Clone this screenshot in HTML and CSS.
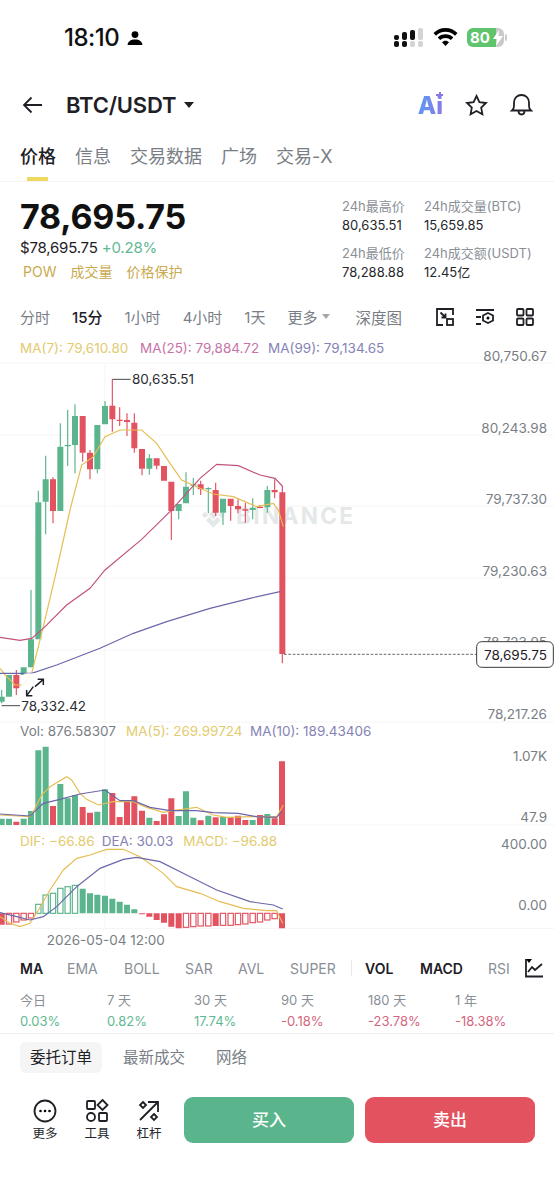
FILE: index.html
```html
<!DOCTYPE html>
<html lang="en">
<head>
    <meta charset="UTF-8">
    <title>BTC/USDT</title>
    <link rel="stylesheet" href="styles.css">
</head>
<body>
    <div class="status-bar">
        <span class="clock">18:10</span>
        <svg class="person" width="16" height="16" viewBox="0 0 16 16"><circle cx="8" cy="4.6" r="3.4"/><path d="M.6 15c0-3.6 3.2-5.6 7.4-5.6s7.4 2 7.4 5.6z"/></svg>
        <div class="status-right">
            <svg width="29" height="20" viewBox="0 0 29 20">
                <g fill="#111"><rect x="0" y="13" width="5" height="6" rx="2"/><rect x="8" y="13" width="5" height="6" rx="2"/><rect x="0" y="7" width="5" height="5" rx="2"/><rect x="8" y="4" width="5" height="8" rx="2"/><rect x="16" y="2" width="5" height="10" rx="2"/></g>
                <g fill="#d4d4d4"><rect x="16" y="13" width="5" height="6" rx="2"/><rect x="24" y="13" width="5" height="6" rx="2"/><rect x="24" y="0" width="5" height="12" rx="2"/></g>
            </svg>
            <svg width="25" height="19" viewBox="0 0 25 19"><path d="M12.5 0C7.8 0 3.600 1.900.5 5l2.500 2.700C5.500 5.300 8.800 3.700 12.500 3.700s7 1.600 9.500 4L24.500 5C21.400 1.900 17.200 0 12.500 0z"/><path d="M12.500 6.200c-3 0-5.800 1.200-7.800 3.200l2.500 2.700c1.400-1.400 3.200-2.200 5.300-2.200s3.900.8 5.300 2.200l2.500-2.700c-2-2-4.800-3.200-7.800-3.200z"/><path d="M12.500 12.700c-1.400 0-2.600.6-3.500 1.500l3.500 3.900 3.500-3.900c-.9-.9-2.100-1.500-3.500-1.500z"/></svg>
            <div class="battery">
                <span class="battery-level">80</span>
                <svg class="bolt" width="10" height="16" viewBox="0 0 10 16"><path d="M6 0 0 9h4l-1 7 7-10H5.500z"/></svg>
            </div>
            <span class="battery-nub"></span>
        </div>
    </div>

    <div class="nav">
        <svg class="back" width="21" height="18" viewBox="0 0 21 18"><path d="M20 9H2M9.500 1.500 2 9l7.500 7.500"/></svg>
        <span class="pair">BTC/USDT</span>
        <span class="caret"></span>
        <div class="nav-icons">
            <span class="ai">Ai<i></i></span>
            <svg width="23" height="23" viewBox="0 0 23 23"><path class="line-icon" d="m11.500 2 2.900 6.100 6.600.9-4.800 4.600 1.200 6.600-5.900-3.200-5.900 3.200 1.200-6.600L2 9l6.600-.9z"/></svg>
            <svg width="23" height="24" viewBox="0 0 23 24"><path class="line-icon" d="M2 17.500c1.500-1.200 2-2.500 2-4.500V9.500C4 5 7.200 2 11.500 2S19 5 19 9.500V13c0 2 .5 3.300 2 4.500zM8.500 18c0 2.200 1.300 3.500 3 3.500s3-1.300 3-3.500"/></svg>
        </div>
    </div>

    <div class="tabs">
        <span class="tab tab-active">价格</span>
        <span class="tab">信息</span>
        <span class="tab">交易数据</span>
        <span class="tab">广场</span>
        <span class="tab">交易-X</span>
    </div>

    <div class="ticker">
        <div class="ticker-left">
            <div class="last-price">78,695.75</div>
            <div class="sub-price">$78,695.75 <span class="green">+0.28%</span></div>
            <div class="tags">
                <span>POW</span>
                <span>成交量</span>
                <span>价格保护</span>
            </div>
        </div>
        <div class="stats">
            <div class="stat"><label>24h最高价</label><b>80,635.51</b></div>
            <div class="stat"><label>24h成交量(BTC)</label><b>15,659.85</b></div>
            <div class="stat"><label>24h最低价</label><b>78,288.88</b></div>
            <div class="stat"><label>24h成交额(USDT)</label><b>12.45亿</b></div>
        </div>
    </div>

    <div class="intervals">
        <span class="interval i-fen">分时</span>
        <span class="interval interval-active">15分</span>
        <span class="interval">1小时</span>
        <span class="interval">4小时</span>
        <span class="interval">1天</span>
        <span class="interval">更多</span>
        <span class="more-caret"></span>
        <span class="interval depth">深度图</span>
        <div class="interval-icons">
            <svg width="18" height="18" viewBox="0 0 18 18"><path class="line-icon" d="M7 17H1V1h16v6M4.500 4.500l5 5M9.500 5.500v4h-4"/><rect class="line-icon" x="11" y="11" width="6" height="6"/></svg>
            <svg width="20" height="18" viewBox="0 0 20 18"><path class="line-icon" d="M1 2h18M1 9h5M1 16h5"/><path class="line-icon" d="m13 5 5 2.500v5L13 15l-5-2.500v-5z"/><circle cx="13" cy="10" r="1.500"/></svg>
            <svg width="18" height="18" viewBox="0 0 18 18"><g class="line-icon"><rect x="1" y="1" width="6.500" height="6.500" rx="1"/><rect x="10.500" y="1" width="6.500" height="6.500" rx="1"/><rect x="1" y="10.500" width="6.500" height="6.500" rx="1"/><rect x="10.500" y="10.500" width="6.500" height="6.500" rx="1"/></g></svg>
        </div>
    </div>

    <!-- viewBox is 3x the page pixels, y 0 = page y 335 -->
    <svg class="chart" width="554" height="615" viewBox="0 0 1662 1845">
        <g class="grid">
            <path d="M0 84H1662M0 300H1662M0 513H1662M0 729H1662M0 945H1662M0 1161H1662M0 1470H1662M0 1780H1662"/>
            <path d="M315 84V1780"/>
        </g>

        <text class="axis" x="1641" y="77">80,750.67</text>
        <text class="axis" x="1641" y="293">80,243.98</text>
        <text class="axis" x="1641" y="508">79,737.30</text>
        <text class="axis" x="1641" y="723">79,230.63</text>
        <text class="axis" x="1641" y="935">78,723.95</text>
        <text class="axis" x="1641" y="1151">78,217.26</text>
        <text class="axis" x="1641" y="1277">1.07K</text>
        <text class="axis" x="1641" y="1460">47.9</text>
        <text class="axis" x="1641" y="1543">400.00</text>
        <text class="axis" x="1641" y="1725">0.00</text>

        <text class="legend c-yellow" x="60" y="54">MA(7): 79,610.80</text>
        <text class="legend c-pink" x="420" y="54">MA(25): 79,884.72</text>
        <text class="legend c-purple" x="804" y="54">MA(99): 79,134.65</text>

        <!-- watermark -->
        <path class="mark" d="M640 525l14 14-14 14-14-14zM615 530l10 10-10 10-10-10zM665 530l10 10-10 10-10-10zM640 558l12-12 10 10-22 22-22-22 10-10z"/>
        <text class="mark" x="708" y="567" textLength="351">BINANCE</text>

        <!-- candles, y offset 105 -->
        <g transform="translate(0 105)">
            <path class="wick up" d="M5 960V1000M93 660V892M115 362V397M137 257V493M181 160V230M203 120V288M225 103V310M292 298V310M315 93V108M448 253V314M536 423V448M558 307V350M580 323V375M625 352V430M669 428V465M758 385V448M802 348V428"/>
            <path class="body up" d="M5 980V995M27 915V980M71 892V915M93 808V892M115 397V808M137 328V395M181 230V423M203 225V229M225 138V225M292 165V298M315 108V163M448 265V296M536 402V423M558 350V400M580 343V347M625 354V358M669 386V428M758 413V420M802 360V412"/>
            <path class="wick down" d="M49 900V975M159 322V460M248 248V275M270 240V328M337 28V185M359 112V168M381 130V198M403 130V248M426 296V316M470 287V298M514 423V510M602 332V375M647 338V438M692 408V452M714 388V430M736 398V458M780 405V415M824 328V385M847 852V880"/>
            <path class="body down" d="M49 915V955M159 328V423M248 138V248M270 248V298M337 107V148M359 149V153M381 150V156M403 158V235M426 237V296M470 265V287M492 288V332M514 335V423M602 343V358M647 360V428M692 386V408M714 408V418M736 418V422M780 410V414M824 360V367M847 367V852"/>

            <polyline class="ma s-yellow" points="0,895 20,920 45,945 70,945 95,910 130,770 170,600 210,420 245,285 280,260 315,200 360,180 425,180 470,220 510,280 545,330 590,350 640,372 700,380 770,410 820,400 835,420 850,470"/>
            <polyline class="ma s-pink" points="0,802 60,811 95,805 130,775 200,705 270,655 315,600 425,508 510,425 600,325 650,283 715,287 780,315 825,325 847,348 847,368"/>
            <polyline class="ma s-purple" points="0,910 95,910 170,885 300,835 400,790 500,755 630,715 750,685 840,665"/>

            <path class="marker" d="M337 28H392M5 1007H60"/>
            <text class="peak" x="396" y="42">80,635.51</text>
            <text class="peak" x="64" y="1024">78,332.42</text>

            <rect class="expand-box" x="65" y="910" width="83" height="80" rx="15"/>
            <path class="expand" d="M105 950 130 928M113 928H130V945M100 950 80 977M80 960V977H97"/>
        </g>

        <line class="last-line" x1="852" y1="958" x2="1430" y2="958"/>
        <rect class="last-box" x="1430" y="920" width="230" height="77" rx="15"/>
        <text class="axis last-text" x="1641" y="975">78,695.75</text>

        <!-- volume and macd, y offset 1155 -->
        <text class="legend c-grey" x="60" y="1203">Vol: 876.58307</text>
        <text class="legend c-yellow" x="378" y="1203">MA(5): 269.99724</text>
        <text class="legend c-purple" x="750" y="1203">MA(10): 189.43406</text>
        <text class="legend c-yellow" x="60" y="1533">DIF: −66.86</text>
        <text class="legend c-purple" x="305" y="1533">DEA: 30.03</text>
        <text class="legend c-yellow" x="550" y="1533">MACD: −96.88</text>

        <g transform="translate(0 1155)">
            <path class="bar up" d="M5 296V315M27 296V315M71 296V315M93 273V315M115 91V315M137 80V315M181 192V315M203 235V315M225 225V315M292 275V315M315 208V315M448 293V315M536 288V315M558 214V315M580 293V315M625 287V315M669 291V315M758 300V315M802 282V315"/>
            <path class="bar down" d="M49 305V315M159 258V315M248 261V315M270 278V315M337 219V315M359 291V315M381 245V315M403 229V315M426 272V315M470 303V315M492 283V315M514 235V315M602 301V315M647 292V315M692 292V315M714 287V315M736 300V315M780 285V315M824 295V315M846 124V315"/>
            <polyline class="ma s-yellow" points="0,285 90,290 105,265 125,225 150,200 200,170 215,180 240,220 260,238 295,255 340,245 400,245 440,262 490,277 530,270 590,262 640,285 680,292 760,290 830,290 850,255"/>
            <polyline class="ma s-purple" points="0,282 90,288 130,250 180,238 240,222 315,210 360,242 400,242 450,262 510,272 590,272 640,278 715,280 770,290 830,292 845,275"/>

            <path class="bar up" d="M248 506V580M270 520V580M292 524V580M315 527V580M337 536V580M359 545V580M381 554V580M403 568V580"/>
            <path class="bar down" d="M5 580V614M426 580V583M448 580V590M470 580V600M492 580V608M514 580V620M536 580V625M647 580V618M846 580V625"/>
            <g class="hollow-up">
                <rect x="107" y="553" width="16" height="27"/><rect x="129" y="525" width="16" height="55"/><rect x="151" y="520" width="16" height="60"/><rect x="173" y="505" width="16" height="75"/><rect x="195" y="500" width="16" height="80"/><rect x="217" y="496" width="16" height="84"/>
            </g>
            <g class="hollow-down">
                <rect x="19" y="580" width="16" height="32"/><rect x="41" y="580" width="16" height="26"/><rect x="63" y="580" width="16" height="20"/><rect x="85" y="580" width="16" height="14"/><rect x="550" y="580" width="16" height="42"/><rect x="572" y="580" width="16" height="40"/><rect x="594" y="580" width="16" height="38"/><rect x="617" y="580" width="16" height="38"/><rect x="661" y="580" width="16" height="36"/><rect x="684" y="580" width="16" height="36"/><rect x="706" y="580" width="16" height="34"/><rect x="728" y="580" width="16" height="32"/><rect x="750" y="580" width="16" height="28"/><rect x="772" y="580" width="16" height="26"/><rect x="794" y="580" width="16" height="20"/><rect x="816" y="580" width="16" height="16"/>
            </g>
            <polyline class="ma s-yellow" points="0,590 30,610 60,620 90,610 115,570 150,510 190,450 230,415 270,405 320,388 370,388 420,410 490,460 530,500 600,520 660,545 730,565 800,572 830,572 848,610"/>
            <polyline class="ma s-purple" points="0,578 50,590 90,600 130,590 170,560 230,500 300,445 370,418 410,412 480,425 560,465 650,510 750,545 820,555 848,567"/>
        </g>

        <text class="date" x="140" y="1830">2026-05-04 12:00</text>
    </svg>

    <div class="indicators">
        <span class="ind ind-on ind-ma">MA</span>
        <span class="ind ind-ema">EMA</span>
        <span class="ind ind-boll">BOLL</span>
        <span class="ind ind-sar">SAR</span>
        <span class="ind ind-avl">AVL</span>
        <span class="ind ind-super">SUPER</span>
        <span class="ind-sep"></span>
        <span class="ind ind-on ind-vol">VOL</span>
        <span class="ind ind-on ind-macd">MACD</span>
        <span class="ind ind-rsi">RSI</span>
        <svg class="ind-icon" width="18" height="20" viewBox="0 0 18 20"><path class="line-icon" d="M1 1V18.500H18M3 14l4-5 3 3 7-6"/><path d="M1 1h6L4 5z"/></svg>
    </div>

    <div class="periods">
        <div class="period"><label>今日</label><span class="green">0.03%</span></div>
        <div class="period"><label>7 天</label><span class="green">0.82%</span></div>
        <div class="period"><label>30 天</label><span class="green">17.74%</span></div>
        <div class="period"><label>90 天</label><span class="red">-0.18%</span></div>
        <div class="period"><label>180 天</label><span class="red">-23.78%</span></div>
        <div class="period"><label>1 年</label><span class="red">-18.38%</span></div>
    </div>

    <div class="sub-tabs">
        <span class="sub-tab sub-tab-active">委托订单</span>
        <span class="sub-tab">最新成交</span>
        <span class="sub-tab">网络</span>
    </div>

    <div class="actions">
        <div class="action">
            <svg width="24" height="24" viewBox="0 0 24 24"><circle class="line-icon" cx="12" cy="12" r="10.500"/><circle cx="7.500" cy="12" r="1.300"/><circle cx="12" cy="12" r="1.300"/><circle cx="16.500" cy="12" r="1.300"/></svg>
            <span>更多</span>
        </div>
        <div class="action">
            <svg width="24" height="24" viewBox="0 0 24 24"><g class="line-icon"><rect x="2" y="2" width="8" height="8" rx="1"/><path d="m17.500 1 5 5-5 5-5-5z"/><circle cx="6" cy="18" r="4"/><rect x="14" y="14" width="8" height="8" rx="1"/></g></svg>
            <span>工具</span>
        </div>
        <div class="action">
            <svg width="24" height="24" viewBox="0 0 24 24"><g class="line-icon"><path d="M3 21 21 3M11 3h10v10"/><path d="m6 3 3 3-3 3-3-3zM17 15l3 3-3 3-3-3z"/></g></svg>
            <span>杠杆</span>
        </div>
        <button class="trade buy">买入</button>
        <button class="trade sell">卖出</button>
    </div>
</body>
</html>
```

FILE: styles.css
```css
body {
    margin: 0;
    width: 554px;
    height: 1200px;
    overflow: hidden;
    background-color: #fff;
    color: #1e2026;
    font-family: Inter, "Noto Sans CJK SC", sans-serif;
}

svg {
    display: block;
}

.line-icon {
    fill: none;
    stroke: #1e2026;
    stroke-width: 1.8;
}

.green {
    color: #62b892;
}

.red {
    color: #d5667e;
}

/* status bar */
.status-bar {
    display: flex;
    align-items: center;
    height: 75px;
    padding-left: 64px;
}

.clock {
    font-size: 24px;
    font-weight: 500;
    letter-spacing: -0.5px;
    color: #111;
}

.person {
    margin-left: 8px;
}

.status-right {
    display: flex;
    align-items: center;
    margin-left: auto;
    margin-right: 47px;
}

.status-right svg:first-child {
    margin-right: 10px;
}

.battery {
    display: flex;
    align-items: center;
    justify-content: space-between;
    box-sizing: border-box;
    width: 37px;
    height: 19px;
    margin-left: 9px;
    padding: 0 1px 0 3px;
    border-radius: 6px;
    background: linear-gradient(90deg, #5fc46c 78%, #c9c9c9 78%);
}

.battery-level {
    font-size: 15px;
    font-weight: 700;
    color: #fff;
}

.bolt {
    fill: #fff;
}

.battery-nub {
    width: 2px;
    height: 7px;
    margin-left: 1px;
    border-radius: 0 2px 2px 0;
    background-color: #c9c9c9;
}

/* header */
.nav {
    display: flex;
    align-items: center;
    height: 60px;
    padding-left: 22px;
}

.back {
    fill: none;
    stroke: #1e2026;
    stroke-width: 1.8;
}

.pair {
    margin-left: 23px;
    font-size: 22px;
    font-weight: 600;
    letter-spacing: -0.2px;
}

.caret {
    width: 0;
    height: 0;
    margin-left: 8px;
    border-style: solid;
    border-width: 6px 5.500px 0;
    border-color: #1e2026 transparent transparent;
}

.nav-icons {
    display: flex;
    align-items: center;
    gap: 22px;
    margin-left: auto;
    margin-right: 21px;
}

.ai {
    position: relative;
    font-size: 24px;
    font-weight: 800;
    color: #6f8df0;
    background: linear-gradient(100deg, #5b9cf2, #8a78e8);
    -webkit-background-clip: text;
    background-clip: text;
    -webkit-text-fill-color: transparent;
}

/* small plus over the i */
.ai i {
    position: absolute;
    top: 1px;
    right: 0;
    width: 7px;
    height: 7px;
    background:
        linear-gradient(#8a78e8, #8a78e8) center / 7px 2px no-repeat,
        linear-gradient(#8a78e8, #8a78e8) center / 2px 7px no-repeat;
}

/* main tabs */
.tabs {
    display: flex;
    gap: 19px;
    height: 46px;
    padding-left: 20px;
    border-bottom: 1px solid #f3f3f3;
}

.tab {
    position: relative;
    font-size: 18px;
    line-height: 44px;
    color: #797e85;
}

.tab-active {
    font-weight: 500;
    color: #1e2026;
}

.tab-active::after {
    content: "";
    position: absolute;
    left: 7px;
    right: 8px;
    bottom: 0;
    height: 4px;
    background-color: #eed95e;
}

/* price block */
.ticker {
    display: flex;
    justify-content: space-between;
    height: 118px;
    padding-left: 20px;
}

.last-price {
    margin-top: 16px;
    font-size: 34px;
    font-weight: 700;
    line-height: 38px;
    letter-spacing: -0.2px;
    color: #111;
}

.sub-price {
    margin-top: 2px;
    font-size: 15px;
    line-height: 20px;
    letter-spacing: -0.2px;
}

.tags {
    display: flex;
    gap: 14px;
    margin-top: 4px;
    padding-left: 3px;
    font-size: 14px;
    line-height: 20px;
    color: #c9aa4e;
}

.stats {
    display: grid;
    grid-template-columns: 82px 130px;
    grid-auto-rows: 47px;
    margin-top: 14px;
}

.stat label {
    display: block;
    font-size: 13px;
    line-height: 20px;
    color: #8a8f96;
}

.stat b {
    display: block;
    font-size: 13px;
    font-weight: 400;
    line-height: 19px;
    color: #25272c;
}

/* interval row */
.intervals {
    display: flex;
    align-items: center;
    height: 33px;
    padding-bottom: 2px;
    padding-left: 20px;
}

.interval {
    margin-right: 22px;
    font-size: 15px;
    color: #797e85;
}

.interval-active {
    font-weight: 500;
    color: #1e2026;
}

.more-caret {
    width: 0;
    height: 0;
    margin-left: -17px;
    border-style: solid;
    border-width: 5px 4.500px 0;
    border-color: #a4a7ac transparent transparent;
}

.depth {
    margin-left: 25px;
    margin-right: 0;
    font-size: 15.500px;
}

.interval-icons {
    display: flex;
    align-items: center;
    gap: 21px;
    margin-left: auto;
    margin-right: 20px;
}

/* chart */
.grid path {
    fill: none;
    stroke: #f5f5f5;
    stroke-width: 3;
}

.axis {
    font-size: 40.500px;
    text-anchor: end;
    fill: #797e85;
}

.legend {
    font-size: 40.500px;
}

.c-yellow {
    fill: #e3cb6f;
}

.c-pink {
    fill: #c873a8;
}

.c-purple {
    fill: #8583b5;
}

.c-grey {
    fill: #797e85;
}

.mark {
    fill: #e5e8e8;
    font-size: 68px;
    font-weight: 700;
}

.wick,
.body,
.bar,
.ma,
.marker,
.expand {
    fill: none;
}

.wick {
    stroke-width: 3.500;
}

.body {
    stroke-width: 18;
}

.bar {
    stroke-width: 18;
}

.up {
    stroke: #5bb58c;
}

.down {
    stroke: #e2525f;
}

.ma {
    stroke-width: 3.500;
}

.s-yellow {
    stroke: #e6bd53;
}

.s-pink {
    stroke: #c2527e;
}

.s-purple {
    stroke: #6a67a8;
}

.marker {
    stroke: #4a4a4a;
    stroke-width: 3;
}

.peak {
    font-size: 40.500px;
    fill: #2b2d31;
}

.expand-box {
    fill: rgba(255, 255, 255, 0.85);
}

.expand {
    stroke: #1e2026;
    stroke-width: 4.500;
}

.last-line {
    stroke: #4a4a4a;
    stroke-width: 2.500;
    stroke-dasharray: 8 5;
}

.last-box {
    fill: #fff;
    stroke: #3a3a3a;
    stroke-width: 3;
}

.last-text {
    fill: #1e2026;
}

.hollow-up rect,
.hollow-down rect {
    fill: #fff;
    stroke-width: 3.500;
}

.hollow-up rect {
    stroke: #5bb58c;
}

.hollow-down rect {
    stroke: #e2525f;
}

.date {
    font-size: 40.500px;
    fill: #797e85;
}

/* indicators */
.indicators {
    display: flex;
    align-items: center;
    height: 36px;
    padding-left: 20px;
}

.ind {
    font-size: 14px;
    color: #8a8f96;
}

.ind-on {
    font-weight: 600;
    color: #1e2026;
}

.ind-ma { width: 47px; }
.ind-ema { width: 57px; }
.ind-boll { width: 61px; }
.ind-sar { width: 53px; }
.ind-avl { width: 52px; }
.ind-super { width: 61px; }
.ind-vol { width: 55px; }
.ind-macd { width: 68px; }
.ind-rsi { width: 37px; }

.ind-sep {
    width: 1px;
    height: 16px;
    margin-right: 13px;
    background-color: #e9e9e9;
}

/* performance */
.periods {
    display: flex;
    box-sizing: border-box;
    height: 48px;
    padding-left: 20px;
    border-bottom: 1px solid #eee;
}

.period {
    width: 87px;
    font-size: 13px;
}

.period label {
    display: block;
    line-height: 20px;
    margin-top: 4px;
    color: #8a8f96;
}

.period span {
    display: block;
    line-height: 20px;
    margin-top: 1px;
}

/* order tabs */
.sub-tabs {
    display: flex;
    align-items: center;
    gap: 11px;
    height: 47px;
    padding-left: 20px;
}

.sub-tab {
    padding: 0 10px;
    font-size: 15.500px;
    line-height: 31px;
    color: #797e85;
}

.sub-tab-active {
    border-radius: 6px;
    background-color: #f5f5f5;
    color: #1e2026;
}

/* bottom actions */
.actions {
    display: flex;
    align-items: center;
    height: 46px;
    margin-top: 16px;
    padding-left: 27px;
}

.action {
    display: flex;
    flex-direction: column;
    align-items: center;
    gap: 3px;
    width: 36px;
    margin-right: 16px;
    font-size: 12.500px;
    line-height: 16px;
    color: #25272c;
}

.trade {
    width: 170px;
    height: 46px;
    padding-bottom: 4px;
    border: none;
    border-radius: 9px;
    font-family: inherit;
    font-size: 17px;
    font-weight: 500;
    color: #fff;
}

.buy {
    margin-left: 1px;
    background-color: #5bb58c;
}

.sell {
    margin-left: 11px;
    background-color: #e2525f;
}
```
